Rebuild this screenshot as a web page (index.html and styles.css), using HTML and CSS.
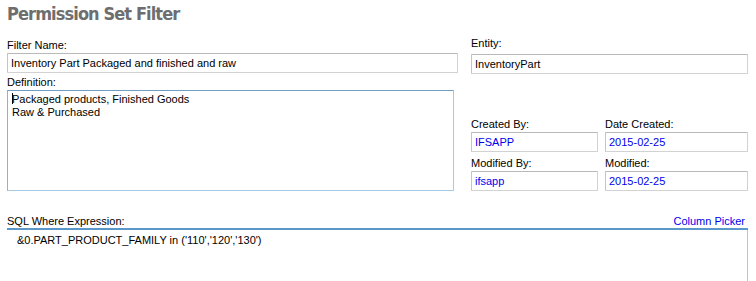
FILE: index.html
```html
<!doctype html>
<html lang="en">
<head>
    <meta charset="UTF-8">
    <title>Permission Set Filter</title>
    <link rel="stylesheet" href="styles.css">
</head>
<body>
    <div class="page">
        <h1 class="title">Permission Set Filter</h1>

        <div class="top">
            <!-- Left column -->
            <div class="col-left">
                <div class="label">Filter Name:</div>
                <div class="field">Inventory Part Packaged and finished and raw</div>
                <div class="label">Definition:</div>
                <div class="area"><span class="caret"></span>Packaged products, Finished Goods<br>Raw &amp; Purchased</div>
            </div>

            <!-- Right column -->
            <div class="col-right">
                <div class="label entity-label">Entity:</div>
                <div class="field">InventoryPart</div>

                <div class="meta">
                    <div class="meta-item">
                        <div class="label">Created By:</div>
                        <div class="field value">IFSAPP</div>
                    </div>
                    <div class="meta-item">
                        <div class="label">Date Created:</div>
                        <div class="field value">2015-02-25</div>
                    </div>
                    <div class="meta-item">
                        <div class="label">Modified By:</div>
                        <div class="field value">ifsapp</div>
                    </div>
                    <div class="meta-item">
                        <div class="label">Modified:</div>
                        <div class="field value">2015-02-25</div>
                    </div>
                </div>
            </div>
        </div>

        <!-- SQL -->
        <div class="sql-head">
            <span>SQL Where Expression:</span>
            <a href="#" class="picker">Column Picker</a>
        </div>
        <div class="sql-area">&amp;0.PART_PRODUCT_FAMILY in ('110','120','130')</div>
    </div>
</body>
</html>
```

FILE: styles.css
```css
/* General */
body {
    margin: 0;
    background-color: #fff;
    font-family: 'Liberation Sans', Arial, sans-serif;
    font-size: 11px;
    color: #000;
    overflow: hidden;
}

.page {
    padding: 0 8px 0 7px;
}

/* Title */
.title {
    margin: 0;
    padding-top: 3px;
    height: 33px;
    font-family: 'DejaVu Sans Condensed', 'Liberation Sans', sans-serif;
    font-stretch: condensed;
    font-size: 18px;
    font-weight: bold;
    color: #6e6e6e;
    letter-spacing: -0.9px;
}

/* Layout */
.top {
    display: flex;
    gap: 13px;
}

.col-left {
    width: 451px;
}

.col-right {
    flex: 1;
}

.label {
    height: 15px;
    line-height: 15px;
    padding-top: 2px;
}

.entity-label {
    padding-top: 0;
    height: 18px;
}

/* Inputs */
.field {
    box-sizing: border-box;
    height: 20px;
    line-height: 18px;
    padding: 0 3px;
    border: 1px solid #d2d2d2;
    border-top-color: #b9b9b9;
    border-left-color: #c4c4c4;
    border-radius: 1px;
    white-space: nowrap;
    overflow: hidden;
}

.area {
    box-sizing: border-box;
    width: 447px;
    height: 101px;
    padding: 2px 4px;
    line-height: 13px;
    border: 1px solid #a7cbe6;
    border-top-color: #6f9ec4;
    border-left-color: #8bb3d3;
}

.caret {
    display: inline-block;
    width: 1px;
    height: 11px;
    margin-right: -1px;
    vertical-align: -1px;
    background-color: #000;
}

/* Created / Modified */
.meta {
    display: grid;
    grid-template-columns: 127px 1fr;
    column-gap: 7px;
    row-gap: 2px;
    margin-top: 41px;
}

.value {
    color: #0000ee;
}

/* SQL Expression */
.sql-head {
    display: flex;
    justify-content: space-between;
    margin-top: 23px;
    height: 14px;
    line-height: 14px;
    border-bottom: 2px solid #5b97c8;
}

.picker {
    color: #0000ee;
    text-decoration: none;
    padding-right: 3px;
}

.sql-area {
    height: 50px;
    padding: 4px 10px;
    border-right: 1px solid #a7cbe6;
}
```
